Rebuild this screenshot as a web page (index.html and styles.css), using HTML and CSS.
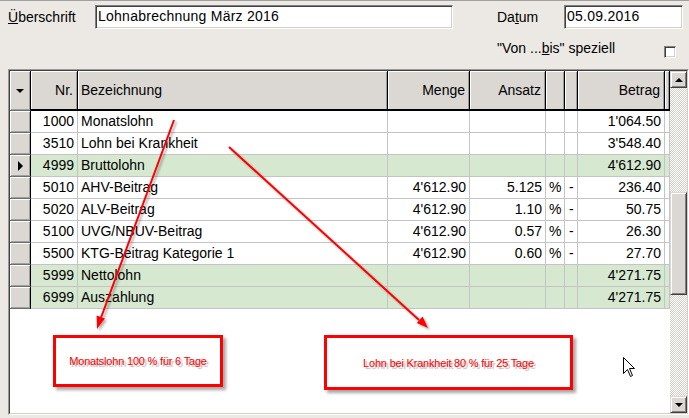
FILE: index.html
```html
<!DOCTYPE html>
<html lang="de">
<head>
<meta charset="utf-8">
<title>Lohnabrechnung</title>
<link rel="stylesheet" href="styles.css">
</head>
<body>
<div class="form">
  <div class="row1">
    <label class="lbl lbl-title"><u>Ü</u>berschrift</label>
    <div class="field field-title">Lohnabrechnung März 2016</div>
    <label class="lbl lbl-date">Da<u>t</u>um</label>
    <div class="field field-date">05.09.2016</div>
  </div>
  <div class="row2">
    <label class="lbl lbl-range">"Von ...<u>b</u>is" speziell</label>
    <span class="check"></span>
  </div>
</div>

<div class="grid">
  <div class="grid-inner">
    <div class="table">
      <div class="hrow">
        <div class="hc ind"><span class="tri-down"></span></div>
        <div class="hc r">Nr.</div>
        <div class="hc l">Bezeichnung</div>
        <div class="hc r">Menge</div>
        <div class="hc r">Ansatz</div>
        <div class="hc"></div>
        <div class="hc"></div>
        <div class="hc r">Betrag</div>
        <div class="hc"></div>
      </div>

      <div class="row">
        <div class="ind"></div><div class="c r">1000</div><div class="c l">Monatslohn</div>
        <div class="c r"></div><div class="c r"></div><div class="c pc"></div><div class="c mi"></div>
        <div class="c r">1'064.50</div><div class="c"></div>
      </div>
      <div class="row">
        <div class="ind"></div><div class="c r">3510</div><div class="c l">Lohn bei Krankheit</div>
        <div class="c r"></div><div class="c r"></div><div class="c pc"></div><div class="c mi"></div>
        <div class="c r">3'548.40</div><div class="c"></div>
      </div>
      <div class="row sum">
        <div class="ind"><span class="tri-right"></span></div><div class="c r">4999</div><div class="c l">Bruttolohn</div>
        <div class="c r"></div><div class="c r"></div><div class="c pc"></div><div class="c mi"></div>
        <div class="c r">4'612.90</div><div class="c"></div>
      </div>
      <div class="row">
        <div class="ind"></div><div class="c r">5010</div><div class="c l">AHV-Beitrag</div>
        <div class="c r">4'612.90</div><div class="c r">5.125</div><div class="c pc">%</div><div class="c mi">-</div>
        <div class="c r">236.40</div><div class="c"></div>
      </div>
      <div class="row">
        <div class="ind"></div><div class="c r">5020</div><div class="c l">ALV-Beitrag</div>
        <div class="c r">4'612.90</div><div class="c r">1.10</div><div class="c pc">%</div><div class="c mi">-</div>
        <div class="c r">50.75</div><div class="c"></div>
      </div>
      <div class="row">
        <div class="ind"></div><div class="c r">5100</div><div class="c l">UVG/NBUV-Beitrag</div>
        <div class="c r">4'612.90</div><div class="c r">0.57</div><div class="c pc">%</div><div class="c mi">-</div>
        <div class="c r">26.30</div><div class="c"></div>
      </div>
      <div class="row">
        <div class="ind"></div><div class="c r">5500</div><div class="c l">KTG-Beitrag Kategorie 1</div>
        <div class="c r">4'612.90</div><div class="c r">0.60</div><div class="c pc">%</div><div class="c mi">-</div>
        <div class="c r">27.70</div><div class="c"></div>
      </div>
      <div class="row sum">
        <div class="ind"></div><div class="c r">5999</div><div class="c l">Nettolohn</div>
        <div class="c r"></div><div class="c r"></div><div class="c pc"></div><div class="c mi"></div>
        <div class="c r">4'271.75</div><div class="c"></div>
      </div>
      <div class="row sum">
        <div class="ind"></div><div class="c r">6999</div><div class="c l">Auszahlung</div>
        <div class="c r"></div><div class="c r"></div><div class="c pc"></div><div class="c mi"></div>
        <div class="c r">4'271.75</div><div class="c"></div>
      </div>
    </div>

    <div class="scroll">
      <div class="sbtn"><span class="tri-up"></span></div>
      <div class="track"><div class="thumb"></div></div>
      <div class="sbtn"><span class="tri-down"></span></div>
    </div>
  </div>
</div>

<div class="note note1">Monatslohn 100 % für 6 Tage</div>
<div class="note note2">Lohn bei Krankheit 80 % für 25 Tage</div>

<svg class="overlay" width="689" height="418" viewBox="0 0 689 418">
  <defs>
    <filter id="sh" x="-20%" y="-20%" width="140%" height="140%">
      <feDropShadow dx="2" dy="2" stdDeviation="1.2" flood-color="#000" flood-opacity="0.3"/>
    </filter>
  </defs>
  <g filter="url(#sh)">
    <line x1="174" y1="120" x2="100.5" y2="319" stroke="#ff0000" stroke-width="2"/>
    <polygon points="97,329 104.9,318.6 96.6,315.6" fill="#ff0000"/>
    <line x1="229" y1="147" x2="419" y2="320" stroke="#ff0000" stroke-width="2"/>
    <polygon points="428,328 422.6,316.6 416.7,323.1" fill="#ff0000"/>
  </g>
  <path d="M623.5 357.5 V373.5 L627.5 369.5 L630.5 376.5 L632.5 375.5 L629.5 368.5 H634.5 Z" fill="#fff" stroke="#000" stroke-width="1"/>
</svg>
</body>
</html>
```

FILE: styles.css
```css
html, body {
  margin: 0;
  padding: 0;
}
body {
  width: 689px;
  height: 418px;
  overflow: hidden;
  position: relative;
  background: #ece9e4;
  font-family: "Liberation Sans", Arial, sans-serif;
  font-size: 14px;
  color: #000;
}

/* ---------- form header ---------- */
.form {
  height: 69px;
  box-sizing: border-box;
  border-top: 1px solid #a0a0a0;
}
.row1 {
  display: flex;
  align-items: center;
  height: 24px;
  margin-top: 4px;
}
.lbl {
  display: block;
  white-space: nowrap;
}
.lbl-title {
  margin-left: 8px;
  width: 87px;
}
.lbl-date {
  margin-left: 44px;
  width: 67px;
}
.field {
  box-sizing: border-box;
  height: 24px;
  line-height: 20px;
  background: #fff;
  border-style: solid;
  border-width: 1px;
  border-color: #808080 #fff #fff #808080;
  box-shadow: inset 1px 1px #404040, inset -1px -1px #d4d0c8;
  padding-left: 2px;
  letter-spacing: 0.25px;
  white-space: nowrap;
}
.field-title { width: 358px; }
.field-date { width: 119px; }

.row2 {
  display: flex;
  height: 20px;
  margin-top: 9px;
}
.lbl-range {
  margin-left: 497px;
  width: 167px;
  line-height: 20px;
}
.check {
  display: block;
  width: 12px;
  height: 12px;
  margin-top: 8px;
  box-sizing: border-box;
  background: #fff;
  border-style: solid;
  border-width: 1px;
  border-color: #808080 #fff #fff #808080;
  box-shadow: inset 1px 1px #404040, inset -1px -1px #d4d0c8;
}

/* ---------- grid ---------- */
.grid {
  margin-left: 8px;
  width: 681px;
  height: 346px;
  box-sizing: border-box;
  border-style: solid;
  border-width: 1px;
  border-color: #9a9a9a #fff #fff #9a9a9a;
}
.grid-inner {
  height: 100%;
  box-sizing: border-box;
  border-style: solid;
  border-width: 1px;
  border-color: #404040 #d4d0c8 #d4d0c8 #404040;
  display: flex;
}
.table {
  width: 660px;
  background: #fff;
}
.hrow, .row {
  display: grid;
  grid-template-columns: 21px 47px 310px 82px 76px 19px 13px 87px 5px;
}
.hrow {
  height: 40px;
}
.hc {
  box-sizing: border-box;
  background: #dbd8d3;
  border-right: 1px solid #000;
  border-bottom: 2px solid #000;
  box-shadow: inset 1px 1px #fff, inset -1px 0 #9a9a9a;
  display: flex;
  align-items: center;
  white-space: nowrap;
}
.hc.r { justify-content: flex-end; padding-right: 4px; }
.hc.l { padding-left: 3px; }
.hc.ind { justify-content: center; }

.row {
  height: 22px;
}
.row.sum { background: #d6e8d0; }
.c {
  box-sizing: border-box;
  border-right: 1px solid #c4c4c4;
  border-bottom: 1px solid #c4c4c4;
  line-height: 21px;
  white-space: nowrap;
  overflow: hidden;
}
.c.r { text-align: right; padding-right: 3px; }
.c.l { padding-left: 3px; }
.c.pc { padding-left: 3px; }
.c.mi { padding-left: 4px; }

.ind {
  box-sizing: border-box;
  background: #dbd8d3;
  border-right: 1px solid #000;
  border-bottom: 1px solid #6e6e6e;
  box-shadow: inset 1px 1px #fff, inset -1px -1px #a0a0a0;
  display: flex;
  align-items: center;
  justify-content: center;
}

.tri-down {
  width: 0;
  height: 0;
  border-left: 4px solid transparent;
  border-right: 4px solid transparent;
  border-top: 4px solid #000;
}
.tri-up {
  width: 0;
  height: 0;
  border-left: 4px solid transparent;
  border-right: 4px solid transparent;
  border-bottom: 4px solid #000;
}
.tri-right {
  width: 0;
  height: 0;
  border-top: 5px solid transparent;
  border-bottom: 5px solid transparent;
  border-left: 5px solid #000;
  margin-left: 1px;
}

/* ---------- scrollbar ---------- */
.scroll {
  width: 17px;
  display: flex;
  flex-direction: column;
}
.sbtn {
  height: 17px;
  box-sizing: border-box;
  background: #dbd8d3;
  border-style: solid;
  border-width: 1px;
  border-color: #dbd8d3 #404040 #404040 #dbd8d3;
  box-shadow: inset 1px 1px #fff, inset -1px -1px #808080;
  display: flex;
  align-items: center;
  justify-content: center;
}
.track {
  flex: 1;
  background: repeating-conic-gradient(#d4d0c8 0 25%, #fff 0 50%) 0 0 / 2px 2px;
}
.thumb {
  margin-top: 104px;
  height: 103px;
  box-sizing: border-box;
  background: #dbd8d3;
  border-style: solid;
  border-width: 1px;
  border-color: #dbd8d3 #404040 #404040 #dbd8d3;
  box-shadow: inset 1px 1px #fff, inset -1px -1px #808080;
}

/* ---------- annotations ---------- */
.note {
  position: absolute;
  box-sizing: border-box;
  border: 3px solid #ff0000;
  background: #fff;
  box-shadow: 3px 3px 3px rgba(0, 0, 0, 0.35);
  color: #ff0000;
  font-size: 11px;
  letter-spacing: -0.2px;
  display: flex;
  align-items: center;
  justify-content: center;
  text-shadow: 2px 2px 1px rgba(0, 0, 0, 0.3);
  white-space: nowrap;
}
.note1 {
  left: 53px;
  top: 335px;
  width: 170px;
  height: 52px;
}
.note2 {
  left: 324px;
  top: 335px;
  width: 249px;
  height: 55px;
}
.overlay {
  position: absolute;
  left: 0;
  top: 0;
  pointer-events: none;
}
```
